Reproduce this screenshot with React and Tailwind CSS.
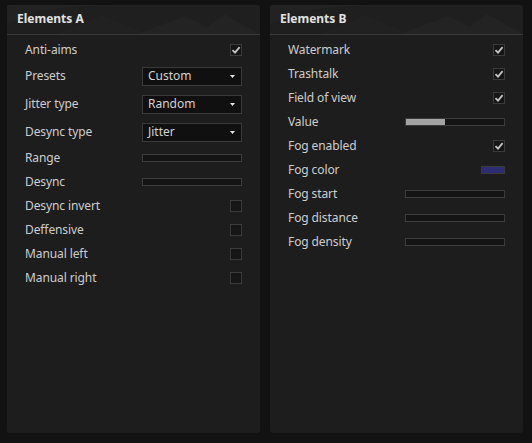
const font = { fontFamily: '"Noto Sans", "DejaVu Sans", sans-serif' }

function Check({ on }) {
  return (
    <div className="flex h-[12px] w-[12px] items-center justify-center border border-[#3b3b3b] bg-[#161616]">
      {on && (
        <svg width="10" height="10" viewBox="0 0 10 10">
          <polyline points="1.5,5.2 4,7.6 8.6,2.2" fill="none" stroke="#c4c4c4" strokeWidth="1.8" />
        </svg>
      )}
    </div>
  )
}

function Select({ value }) {
  return (
    <div className="flex h-[19px] w-[100px] items-center justify-between border border-[#3a3a3a] bg-[#101010] pl-[5px] pr-[6px] text-[12px] text-[#d2d2d2]">
      <span>{value}</span>
      <svg width="5" height="3" viewBox="0 0 5 3">
        <polygon points="0,0 5,0 2.5,3" fill="#e8e8e8" />
      </svg>
    </div>
  )
}

function Slider({ fill = 0 }) {
  return (
    <div className="h-[8px] w-[100px] border border-[#3c3c3c] bg-[#141414]">
      {fill > 0 && <div className="h-full bg-[#a3a3a3]" style={{ width: `${fill}%` }} />}
    </div>
  )
}

function Row({ label, tall, children }) {
  return (
    <div className={`flex items-center justify-between ${tall ? 'h-[28px]' : 'h-[24px]'}`}>
      <span className="text-[12px] tracking-[-0.1px] text-[#cdcdcd]">{label}</span>
      {children}
    </div>
  )
}

function Panel({ title, children }) {
  return (
    <div className="flex h-[428px] w-[253px] flex-col overflow-hidden rounded-[3px] bg-[#1d1d1d]">
      <div className="relative h-[30px] shrink-0 border-b border-[#3a3a3a] bg-[#1f1f1f]">
        <svg className="absolute inset-0" width="253" height="29" viewBox="0 0 253 29">
          <polygon points="0,0 0,20 30,6 70,2 110,0" fill="#222222" />
          <polygon points="50,29 95,10 140,29" fill="#212121" />
          <polygon points="130,29 178,11 200,22 217,9 253,29" fill="#232323" />
        </svg>
        <span className="relative ml-[10px] block pt-[5px] text-[12px] font-bold text-[#e2e2e2]">{title}</span>
      </div>
      <div className="flex flex-col pl-[18px] pr-[18px] pt-[3px]">{children}</div>
    </div>
  )
}

export default function App() {
  return (
    <div className="flex h-[443px] w-[532px] gap-[10px] bg-[#121212] pl-[7px] pt-[5px]" style={font}>
      <Panel title="Elements A">
        <Row label="Anti-aims"><Check on /></Row>
        <Row label="Presets" tall><Select value="Custom" /></Row>
        <Row label="Jitter type" tall><Select value="Random" /></Row>
        <Row label="Desync type" tall><Select value="Jitter" /></Row>
        <Row label="Range"><Slider /></Row>
        <Row label="Desync"><Slider /></Row>
        <Row label="Desync invert"><Check /></Row>
        <Row label="Deffensive"><Check /></Row>
        <Row label="Manual left"><Check /></Row>
        <Row label="Manual right"><Check /></Row>
      </Panel>
      <Panel title="Elements B">
        <Row label="Watermark"><Check on /></Row>
        <Row label="Trashtalk"><Check on /></Row>
        <Row label="Field of view"><Check on /></Row>
        <Row label="Value"><Slider fill={40} /></Row>
        <Row label="Fog enabled"><Check on /></Row>
        <Row label="Fog color">
          <div className="h-[8px] w-[24px] border border-[#3a3a3a] bg-[#2c2c72]" />
        </Row>
        <Row label="Fog start"><Slider /></Row>
        <Row label="Fog distance"><Slider /></Row>
        <Row label="Fog density"><Slider /></Row>
      </Panel>
    </div>
  )
}
